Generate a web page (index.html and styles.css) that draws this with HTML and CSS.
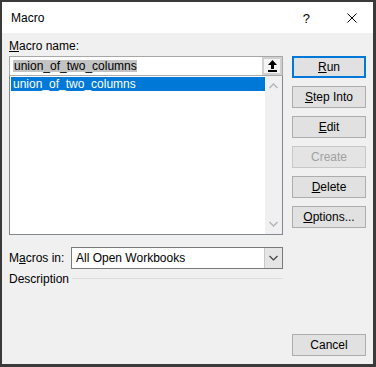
FILE: index.html
```html
<!DOCTYPE html>
<html lang="en">
<head>
  <meta charset="UTF-8">
  <title>Macro</title>
  <link rel="stylesheet" href="styles.css">
</head>
<body>
  <div class="window">
    <div class="titlebar">
      <span class="title">Macro</span>
      <span class="help">?</span>
      <svg class="close" width="10" height="10" viewBox="0 0 10 10">
        <path d="M0.5 0.5 L9.5 9.5 M9.5 0.5 L0.5 9.5" stroke="#000" stroke-width="1"/>
      </svg>
    </div>

    <div class="content">
      <div class="left">
        <div class="label"><u>M</u>acro name:</div>
        <div class="namebox">
          <span class="sel-text">union_of_two_columns</span>
          <span class="upbtn">
            <svg width="9" height="12" viewBox="0 0 9 12">
              <path d="M4.5 0 L9 5 L6 5 L6 9 L3 9 L3 5 L0 5 Z" fill="#000"/>
              <rect x="0" y="10" width="9" height="2" fill="#000"/>
            </svg>
          </span>
        </div>
        <div class="listbox">
          <div class="items">
            <div class="item selected">union_of_two_columns</div>
          </div>
          <div class="scrollbar">
            <svg width="9" height="6" viewBox="0 0 9 6"><path d="M0.5 5 L4.5 1 L8.5 5" fill="none" stroke="#b4b4b4" stroke-width="1.4"/></svg>
            <svg width="9" height="6" viewBox="0 0 9 6"><path d="M0.5 1 L4.5 5 L8.5 1" fill="none" stroke="#b4b4b4" stroke-width="1.4"/></svg>
          </div>
        </div>

        <div class="macros-in">
          <span class="label">M<u>a</u>cros in:</span>
          <div class="combo">
            <span class="combo-text">All Open Workbooks</span>
            <span class="combo-btn">
              <svg width="9" height="6" viewBox="0 0 9 6"><path d="M0.5 1 L4.5 5 L8.5 1" fill="none" stroke="#404040" stroke-width="1.2"/></svg>
            </span>
          </div>
        </div>

        <div class="description">
          <span class="label">Description</span>
          <span class="rule"></span>
        </div>
      </div>

      <div class="right">
        <div class="btn default"><u>R</u>un</div>
        <div class="btn"><u>S</u>tep Into</div>
        <div class="btn"><u>E</u>dit</div>
        <div class="btn disabled">Create</div>
        <div class="btn"><u>D</u>elete</div>
        <div class="btn"><u>O</u>ptions...</div>
        <div class="btn cancel">Cancel</div>
      </div>
    </div>
  </div>
</body>
</html>
```

FILE: styles.css
```css
html, body {
  margin: 0;
  padding: 0;
}
body {
  font-family: "Liberation Sans", Arial, sans-serif;
  font-size: 12px;
  color: #000;
}
.window {
  box-sizing: border-box;
  width: 376px;
  height: 367px;
  border: solid #3a3a3a;
  border-width: 2px 3px 3px 2px;
  background: #f0f0f0;
  display: flex;
  flex-direction: column;
}
.titlebar {
  height: 31px;
  background: #ffffff;
  display: flex;
  align-items: center;
  padding-left: 9px;
  padding-right: 16px;
}
.title {
  flex: 1;
  font-size: 12px;
  padding-top: 1px;
}
.help {
  font-size: 13px;
  margin-right: 37px;
  padding-top: 1px;
}
.close {
  display: block;
}
.content {
  flex: 1;
  display: flex;
  gap: 9px;
  padding: 6px 7px 8px 7px;
}
.left {
  width: 274px;
  display: flex;
  flex-direction: column;
}
.label {
  line-height: 14px;
}
.left > .label {
  margin-bottom: 3px;
}
.namebox {
  box-sizing: border-box;
  height: 20px;
  border: 1px solid #a8a8a8;
  background: #fff;
  display: flex;
  align-items: center;
  padding-left: 3px;
}
.sel-text {
  flex: 1;
}
.sel-text {
  flex: 0 0 auto;
  background: #c3c3c3;
  line-height: 12px;
  padding: 0 0 0 1px;
}
.namebox .upbtn {
  margin-left: auto;
  box-sizing: border-box;
  width: 20px;
  height: 18px;
  border: 2px solid #d0d0d0;
  background: #f4f4f4;
  display: flex;
  align-items: center;
  justify-content: center;
}
.upbtn svg {
  display: block;
}
.listbox {
  box-sizing: border-box;
  height: 159px;
  border: 1px solid #828790;
  border-top: none;
  background: #fff;
  display: flex;
}
.items {
  flex: 1;
  padding: 1px 0 0 1px;
}
.item {
  height: 14px;
  line-height: 14px;
  padding-left: 2px;
}
.item.selected {
  background: #0078d7;
  color: #fff;
}
.scrollbar {
  width: 17px;
  background: #f0f0f0;
  display: flex;
  flex-direction: column;
  justify-content: space-between;
  align-items: center;
  padding: 7px 0 7px 0;
}
.scrollbar svg {
  display: block;
}
.macros-in {
  display: flex;
  align-items: center;
  margin-top: 12px;
  height: 22px;
}
.macros-in .label {
  width: 62px;
}
.combo {
  box-sizing: border-box;
  flex: 1;
  height: 22px;
  border: 1px solid #7a7a7a;
  background: #fff;
  display: flex;
  align-items: center;
}
.combo-text {
  flex: 1;
  padding-left: 4px;
}
.combo-btn {
  box-sizing: border-box;
  width: 18px;
  height: 20px;
  background: #e5e5e5;
  border-left: 1px solid #c8c8c8;
  display: flex;
  align-items: center;
  justify-content: center;
}
.description {
  display: flex;
  align-items: center;
  gap: 3px;
  margin-top: 3px;
}
.rule {
  flex: 1;
  height: 1px;
  background: #dcdcdc;
  margin-top: -1px;
}
.right {
  width: 74px;
  display: flex;
  flex-direction: column;
  gap: 8px;
  padding-top: 17px;
}
.btn {
  box-sizing: border-box;
  height: 22px;
  border: 1px solid #adadad;
  background: #e1e1e1;
  display: flex;
  align-items: center;
  justify-content: center;
}
.btn.default {
  border: 2px solid #0078d7;
}
.btn.disabled {
  color: #a0a0a0;
  border-color: #c8c8c8;
  background: #e4e4e4;
}
.btn.cancel {
  margin-top: auto;
}
```
